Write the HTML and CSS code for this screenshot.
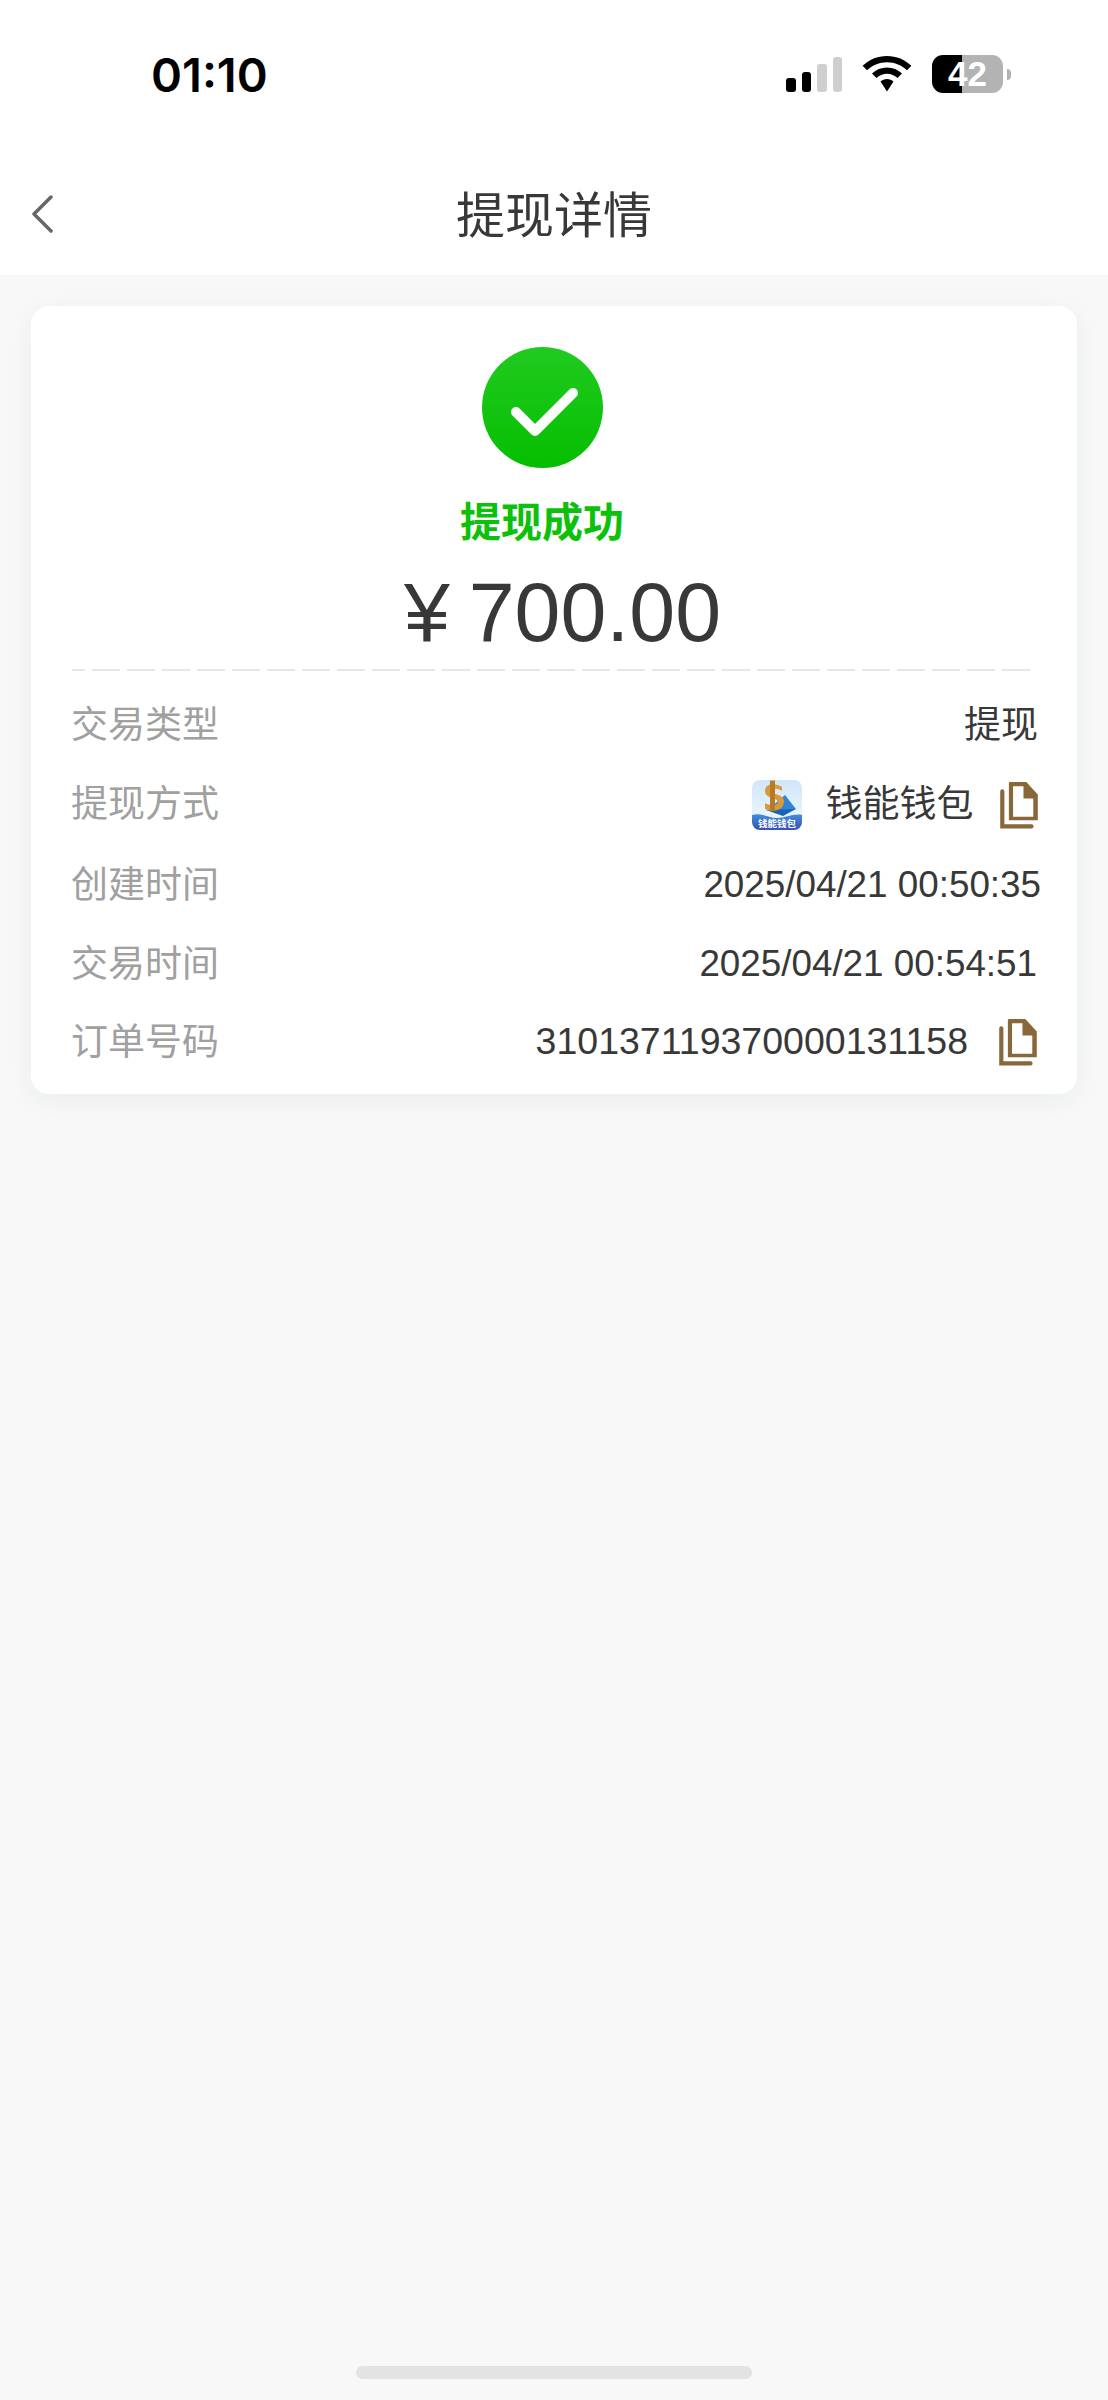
FILE: index.html
```html
<!DOCTYPE html>
<html lang="zh-CN">
<head>
<meta charset="utf-8">
<title>提现详情</title>
<link rel="stylesheet" href="styles.css">
</head>
<body>
<div class="page">
  <header class="top">
    <div class="status">
      <span class="clock">01:10</span>
      <div class="indicators">
        <div class="signal">
          <i class="bar bar-1"></i><i class="bar bar-2"></i><i class="bar bar-3"></i><i class="bar bar-4"></i>
        </div>
        <svg class="wifi" viewBox="0 0 50 36" aria-hidden="true">
          <path d="M25 0C15.500 0 7 3.700 0.600 9.800L5 14.300C10.200 9.400 17.200 6.300 25 6.300S39.800 9.400 45 14.300L49.400 9.800C43 3.700 34.500 0 25 0Z"/>
          <path d="M25 11.500C19.300 11.500 14 13.700 10 17.500L14.500 22C17.300 19.400 21 17.800 25 17.800S32.700 19.400 35.500 22L40 17.500C36 13.700 30.700 11.500 25 11.500Z"/>
          <path d="M25 23C22.500 23 20.300 24 18.500 25.500L25 35.500L31.500 25.500C29.700 24 27.500 23 25 23Z"/>
        </svg>
        <div class="battery">
          <span class="battery-body">42</span>
          <i class="battery-cap"></i>
        </div>
      </div>
    </div>
    <nav class="nav">
      <svg class="back" viewBox="0 0 24 38" aria-hidden="true">
        <path d="M21 2L4 19L21 36"/>
      </svg>
      <h1 class="title">提现详情</h1>
    </nav>
  </header>

  <main class="card">
    <section class="summary">
      <svg class="check" viewBox="0 0 121 121" aria-hidden="true">
        <defs>
          <linearGradient id="okGrad" x1="0" y1="0" x2="0" y2="1">
            <stop offset="0" stop-color="#20cb20"/>
            <stop offset="1" stop-color="#06be00"/>
          </linearGradient>
        </defs>
        <circle cx="60.500" cy="60.500" r="60.500" fill="url(#okGrad)"/>
        <path class="check-mark" d="M34 65L53 84L91 46"/>
      </svg>
      <div class="state">提现成功</div>
      <div class="amount">¥ 700.00</div>
    </section>
    <div class="dash"></div>
    <dl class="rows">
      <div class="row row-a">
        <dt class="label">交易类型</dt>
        <dd class="value">提现</dd>
      </div>
      <div class="row row-b">
        <dt class="label">提现方式</dt>
        <dd class="value">
          <svg class="logo" viewBox="0 0 50 50" aria-hidden="true">
            <defs>
              <linearGradient id="skyGrad" x1="0" y1="0" x2="0" y2="1">
                <stop offset="0" stop-color="#cfe6fa"/>
                <stop offset="1" stop-color="#f4faff"/>
              </linearGradient>
              <linearGradient id="seaGrad" x1="0" y1="0" x2="0" y2="1">
                <stop offset="0" stop-color="#3f8ede"/>
                <stop offset="1" stop-color="#3a4fb4"/>
              </linearGradient>
              <clipPath id="logoClip"><rect width="50" height="50" rx="8"/></clipPath>
            </defs>
            <g clip-path="url(#logoClip)">
              <rect width="50" height="50" fill="url(#skyGrad)"/>
              <path d="M18 28L33 15L44 29L30 32Z" fill="#2f86d6"/>
              <path d="M14 30L44 29L31 36Z" fill="#1d62b4"/>
              <path d="M30 7C22 2 12 4 13 12C14 19 25 17 26 22C26 26 18 26 13 23L13 29C20 33 32 31 32 21C32 14 20 15 20 11C20 8 26 8 30 11Z" fill="#d79b3e"/>
              <path d="M18 0.500H23V31H18Z" fill="#b97a28"/>
              <path d="M0 35C10 32 16 38 25 38C34 38 42 33 50 35V50H0Z" fill="url(#seaGrad)"/>
              <text class="logo-text" x="25" y="47" text-anchor="middle">钱能钱包</text>
            </g>
          </svg>
          <span class="wallet">钱能钱包</span>
          <svg class="copy" viewBox="0 0 40 46" aria-hidden="true">
            <path class="copy-back" d="M4 10V43.500H32"/>
            <path class="copy-front" fill-rule="evenodd" d="M11 1H27L38 13V37.700H10.300V1.700ZM14.300 5V34.300H33.700V16.700H24.300V5Z"/>
          </svg>
        </dd>
      </div>
      <div class="row row-c">
        <dt class="label">创建时间</dt>
        <dd class="value num num-out">2025/04/21 00:50:35</dd>
      </div>
      <div class="row row-d">
        <dt class="label">交易时间</dt>
        <dd class="value num num-flush">2025/04/21 00:54:51</dd>
      </div>
      <div class="row row-e">
        <dt class="label">订单号码</dt>
        <dd class="value">
          <span class="num order">310137119370000131158</span>
          <svg class="copy copy-2" viewBox="0 0 40 46" aria-hidden="true">
            <path class="copy-back" d="M4 10V43.500H32"/>
            <path class="copy-front" fill-rule="evenodd" d="M11 1H27L38 13V37.700H10.300V1.700ZM14.300 5V34.300H33.700V16.700H24.300V5Z"/>
          </svg>
        </dd>
      </div>
    </dl>
  </main>

  <div class="spacer"></div>
  <div class="home"></div>
</div>
</body>
</html>
```

FILE: styles.css
```css
* { box-sizing: border-box; }
html, body { margin: 0; padding: 0; }
body {
  background: #f8f8f8;
  color: #383838;
  font-family: "Liberation Sans", "Noto Sans CJK SC", sans-serif;
}
.page {
  width: 1108px;
  height: 2400px;
  display: flex;
  flex-direction: column;
}

/* header */
.top { background: #fff; height: 275px; flex: none; }
.status {
  height: 148px;
  padding: 0 97px 0 151px;
  display: flex;
  align-items: center;
  justify-content: space-between;
}
.clock {
  font-family: Inter, "Liberation Sans", sans-serif;
  font-weight: 600;
  font-size: 47px;
  color: #000;
}
.indicators { display: flex; align-items: center; }
.signal { display: flex; align-items: flex-end; gap: 6px; height: 36px; margin-right: 20px; }
.bar { display: block; width: 9.500px; border-radius: 3px; background: #000; }
.bar-1 { height: 14px; }
.bar-2 { height: 20px; }
.bar-3 { height: 28px; background: #cfcfcf; }
.bar-4 { height: 35px; background: #cfcfcf; }
.wifi { width: 50px; height: 36px; fill: #000; margin-right: 20px; }
.battery { display: flex; align-items: center; gap: 4px; }
.battery-body {
  width: 71px;
  height: 38px;
  border-radius: 11px;
  background: linear-gradient(to right, #000 0, #000 30px, #b3b3b3 30px, #b3b3b3 100%);
  color: #fff;
  font-size: 35px;
  font-weight: 700;
  line-height: 38px;
  text-align: center;
}
.battery-cap {
  display: block;
  width: 4px;
  height: 11px;
  border-radius: 0 6px 6px 0;
  background: #b3b3b3;
}
.nav {
  height: 127px;
  position: relative;
  display: flex;
  align-items: center;
  justify-content: center;
}
.back {
  position: absolute;
  left: 30px;
  top: 47px;
  width: 24px;
  height: 38px;
  fill: none;
  stroke: #666;
  stroke-width: 3.500;
  stroke-linecap: round;
  stroke-linejoin: round;
}
.title {
  margin: 10px 0 0;
  font-size: 49px;
  font-weight: 400;
  color: #383838;
  line-height: 1;
}

/* card */
.card {
  flex: none;
  margin: 31px 31px 0;
  height: 788px;
  background: #fff;
  border-radius: 18px;
  padding: 41px 41px 0;
  box-shadow: 0 6px 24px rgba(210, 214, 220, 0.35);
}
.summary { display: flex; flex-direction: column; align-items: center; padding-right: 24px; }
.check { width: 121px; height: 121px; display: block; }
.check-mark {
  fill: none;
  stroke: #fff;
  stroke-width: 10;
  stroke-linecap: round;
  stroke-linejoin: round;
}
.state {
  margin-top: 33px;
  font-size: 41px;
  line-height: 44px;
  font-weight: 700;
  color: #0cc10a;
}
.amount {
  margin: 20px 0 0 41px;
  font-size: 82.500px;
  line-height: 94px;
  word-spacing: -4px;
  color: #383838;
  white-space: pre;
}
.dash {
  margin-top: 10px;
  height: 2px;
  background-image: linear-gradient(to right, #e6e6e6 28px, transparent 28px);
  background-size: 35px 2px;
  background-position: -15px 0;
  background-repeat: repeat-x;
}
.rows { margin: 15px 0 0; }
.row {
  display: flex;
  align-items: center;
  justify-content: space-between;
}
.row-a { height: 78px; }
.row-b { height: 81px; }
.row-c { height: 80px; }
.row-d { height: 78px; }
.row-e { height: 78px; }
.label { font-size: 37px; color: #a0a0a0; line-height: 1; margin-left: -1px; }
.value {
  margin: 0 -2px 0 0;
  display: flex;
  align-items: center;
  font-size: 37px;
  color: #383838;
  line-height: 1;
}
.num { font-size: 36.800px; }
.num-out { margin-right: -5px; }
.num-flush { margin-right: -1px; }
.logo { width: 50px; height: 50px; margin-right: 24px; display: block; }
.logo-text { font-size: 9.500px; font-weight: 700; fill: #fff; }
.wallet { margin-right: 24.500px; }
.copy { width: 42px; height: 48px; display: block; margin-right: -2px; }
.copy-2 { margin-left: 29px; margin-right: -1px; }
.copy-back { fill: none; stroke: #886738; stroke-width: 4; stroke-linecap: round; }
.copy-front { fill: #886738; }
.order { font-size: 37.500px; }

/* bottom */
.spacer { flex: 1; }
.home {
  flex: none;
  width: 396px;
  height: 13px;
  margin: 0 auto 21px;
  border-radius: 7px;
  background: #e3e3e3;
}
```
